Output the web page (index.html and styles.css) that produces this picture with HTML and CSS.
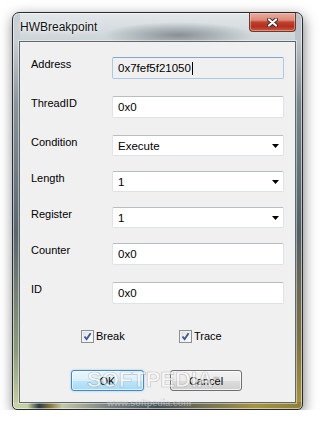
FILE: index.html
```html
<!DOCTYPE html>
<html lang="en">
<head>
    <meta charset="UTF-8">
    <title>HWBreakpoint</title>
    <link rel="stylesheet" href="styles.css">
</head>
<body>

<div class="window">
    <div class="titlebar">
        <span class="title">HWBreakpoint</span>
        <div class="close">
            <svg width="11" height="9" viewBox="0 0 11 9">
                <path d="M2 1.5 L9 7.5 M9 1.5 L2 7.5" stroke="#3b2b2b" stroke-width="4" stroke-linecap="round"/>
                <path d="M2 1.5 L9 7.5 M9 1.5 L2 7.5" stroke="#ffffff" stroke-width="2.2" stroke-linecap="round"/>
            </svg>
        </div>
    </div>

    <div class="client">
        <div class="row">
            <label>Address</label>
            <div class="field focus">0x7fef5f21050<span class="caret"></span></div>
        </div>
        <div class="row">
            <label>ThreadID</label>
            <div class="field">0x0</div>
        </div>
        <div class="row combo-row">
            <label>Condition</label>
            <div class="field combo">Execute<svg class="arrow" width="7" height="4" viewBox="0 0 7 4"><polygon points="0,0 7,0 3.5,4" fill="#000"/></svg></div>
        </div>
        <div class="row combo-row">
            <label>Length</label>
            <div class="field combo">1<svg class="arrow" width="7" height="4" viewBox="0 0 7 4"><polygon points="0,0 7,0 3.5,4" fill="#000"/></svg></div>
        </div>
        <div class="row combo-row">
            <label>Register</label>
            <div class="field combo">1<svg class="arrow" width="7" height="4" viewBox="0 0 7 4"><polygon points="0,0 7,0 3.5,4" fill="#000"/></svg></div>
        </div>
        <div class="row">
            <label>Counter</label>
            <div class="field">0x0</div>
        </div>
        <div class="row last">
            <label>ID</label>
            <div class="field">0x0</div>
        </div>

        <div class="checks">
            <div class="check">
                <span class="box"><svg width="11" height="11" viewBox="0 0 11 11"><path d="M2.5 5.5 L4.6 8.2 L8.6 2.2" fill="none" stroke="#3d5a99" stroke-width="1.9"/></svg></span>
                Break
            </div>
            <div class="check">
                <span class="box"><svg width="11" height="11" viewBox="0 0 11 11"><path d="M2.5 5.5 L4.6 8.2 L8.6 2.2" fill="none" stroke="#3d5a99" stroke-width="1.9"/></svg></span>
                Trace
            </div>
        </div>

        <div class="buttons">
            <div class="btn default">OK</div>
            <div class="btn">Cancel</div>
        </div>
    </div>

    <!-- watermark over the dialog -->
    <div class="mark">SOFTPEDIA<sup>™</sup></div>
    <div class="mark-url">www.softpedia.com</div>
</div>

</body>
</html>
```

FILE: styles.css
```css
body {
    margin: 0;
    background: #ffffff;
    font-family: 'Liberation Sans', Arial, sans-serif;
    font-size: 11px;
    color: #000;
}

/* window frame */
.window {
    position: relative;
    box-sizing: border-box;
    width: 291px;
    height: 398px;
    margin: 12px 0 0 12px;
    padding: 0 6px 6px 6px;
    display: flex;
    flex-direction: column;
    border: 1px solid #252b30;
    border-radius: 7px 7px 5px 5px;
    box-shadow: 1px 4px 13px rgba(0,0,0,0.5), inset 0 0 0 1px rgba(255,255,255,0.55);
    background:
        radial-gradient(ellipse 75px 13px at 165px 22px, rgba(75,85,92,0.55), rgba(75,85,92,0)),
        linear-gradient(to right, #c9d4a6 0, #c3cfa0 5%, #2e3d40 9%, #8a7a3f 13%, #c6c9a4 17%, #7b8583 32%, #46525a 50%, #7a7450 68%, #a8943f 84%, #8f7e35 100%) left bottom / 100% 7px no-repeat,
        linear-gradient(to bottom, #c8cfd3 28px, #8a959a 90px, #59666e 220px, #8e9c7a 340px, #c8d3a3 100%) left top / 7px 100% no-repeat,
        linear-gradient(to bottom, #bcc4c9 28px, #7a858b 90px, #535e64 220px, #7e7142 330px, #a8943f 100%) right top / 7px 100% no-repeat,
        linear-gradient(to bottom, #e2e7ea 0, #cdd4d8 28px, #9ba5aa 60px, #5a666d 200px);
}

.titlebar {
    height: 28px;
    display: flex;
    align-items: flex-start;
}

.title {
    margin: 7px 0 0 1px;
    font-size: 12px;
    line-height: 14px;
    color: #111;
    text-shadow: 0 0 6px rgba(255,255,255,0.9), 0 0 3px rgba(255,255,255,0.8);
}

.close {
    margin-left: auto;
    width: 47px;
    height: 19px;
    box-sizing: border-box;
    display: flex;
    align-items: center;
    justify-content: center;
    border: 1px solid #6b3a33;
    border-top: none;
    border-radius: 0 0 4px 4px;
    background: linear-gradient(to bottom, #e9ad9f 0%, #dc8a79 40%, #c0432e 50%, #b23020 75%, #d0583e 100%);
    box-shadow: inset 0 0 0 1px rgba(255,210,200,0.45);
}

/* client area */
.client {
    flex: 1;
    position: relative;
    display: flex;
    flex-direction: column;
    padding: 15px 11px 0 11px;
    background: #f0f0f0;
    border: 1px solid #5f686e;
    box-shadow: 0 0 0 1px rgba(255,255,255,0.45);
}

.row {
    display: flex;
    align-items: flex-start;
    height: 22px;
    margin-bottom: 17px;
}
.row.combo-row {
    height: 21px;
    margin-bottom: 15px;
}
.row.last { margin-bottom: 26px; }

.row label {
    width: 81px;
    padding-top: 1px;
    line-height: 13px;
}

.field {
    box-sizing: border-box;
    width: 172px;
    height: 22px;
    padding-left: 5px;
    display: flex;
    align-items: center;
    font-size: 11.5px;
    background: #ffffff;
    border: 1px solid #dfe3e8;
    border-top-color: #b9bdc3;
    border-radius: 2px;
}
.field.focus {
    background: #f0f0f0;
    border-color: #a9c9e6;
    border-top-color: #7faad2;
}
.field.combo { height: 21px; }

.caret {
    display: inline-block;
    width: 1px;
    height: 13px;
    margin-left: 1px;
    background: #000;
}

.arrow {
    margin-left: auto;
    margin-right: 4px;
}

/* checkboxes */
.checks {
    display: flex;
    height: 13px;
    margin: 0 0 27px 50px;
}
.check {
    width: 98px;
    display: flex;
    align-items: center;
    gap: 2px;
    line-height: 13px;
}
.box {
    box-sizing: border-box;
    width: 13px;
    height: 13px;
    display: flex;
    align-items: center;
    justify-content: center;
    border: 1px solid #8e8f8f;
    background: linear-gradient(135deg, #dcdcdc 0%, #f4f4f4 60%, #ffffff 100%);
    box-shadow: inset 0 0 0 1px #f2f2f2;
}

/* buttons */
.buttons {
    display: flex;
    gap: 26px;
    margin-left: 40px;
}
.btn {
    box-sizing: border-box;
    width: 73px;
    height: 21px;
    display: flex;
    align-items: center;
    justify-content: center;
    border: 1px solid #707070;
    border-radius: 3px;
    background: linear-gradient(to bottom, #f2f2f2 0%, #ebebeb 50%, #dddddd 51%, #cfcfcf 100%);
    box-shadow: inset 0 0 0 1px rgba(255,255,255,0.7);
}
.btn + .btn { width: 72px; }
.btn.default {
    border-color: #3c8bd0;
    background: linear-gradient(to bottom, #eaf6fd 0%, #d9f0fc 50%, #bee6fd 51%, #a7d9f5 100%);
    box-shadow: inset 0 0 0 1px rgba(255,255,255,0.6), 0 0 2px rgba(60,140,210,0.5);
}

/* watermark */
.mark {
    position: absolute;
    left: 74px;
    top: 356px;
    font-size: 22px;
    line-height: 22px;
    font-weight: bold;
    color: rgba(255,255,255,0.6);
    -webkit-text-stroke: 0.7px rgba(130,130,130,0.45);
}
.mark sup {
    font-size: 7px;
    vertical-align: top;
}
.mark-url {
    position: absolute;
    left: 94px;
    top: 385px;
    font-size: 9px;
    font-weight: bold;
    color: rgba(255,255,255,0.4);
    -webkit-text-stroke: 0.3px rgba(120,120,120,0.35);
}
```
